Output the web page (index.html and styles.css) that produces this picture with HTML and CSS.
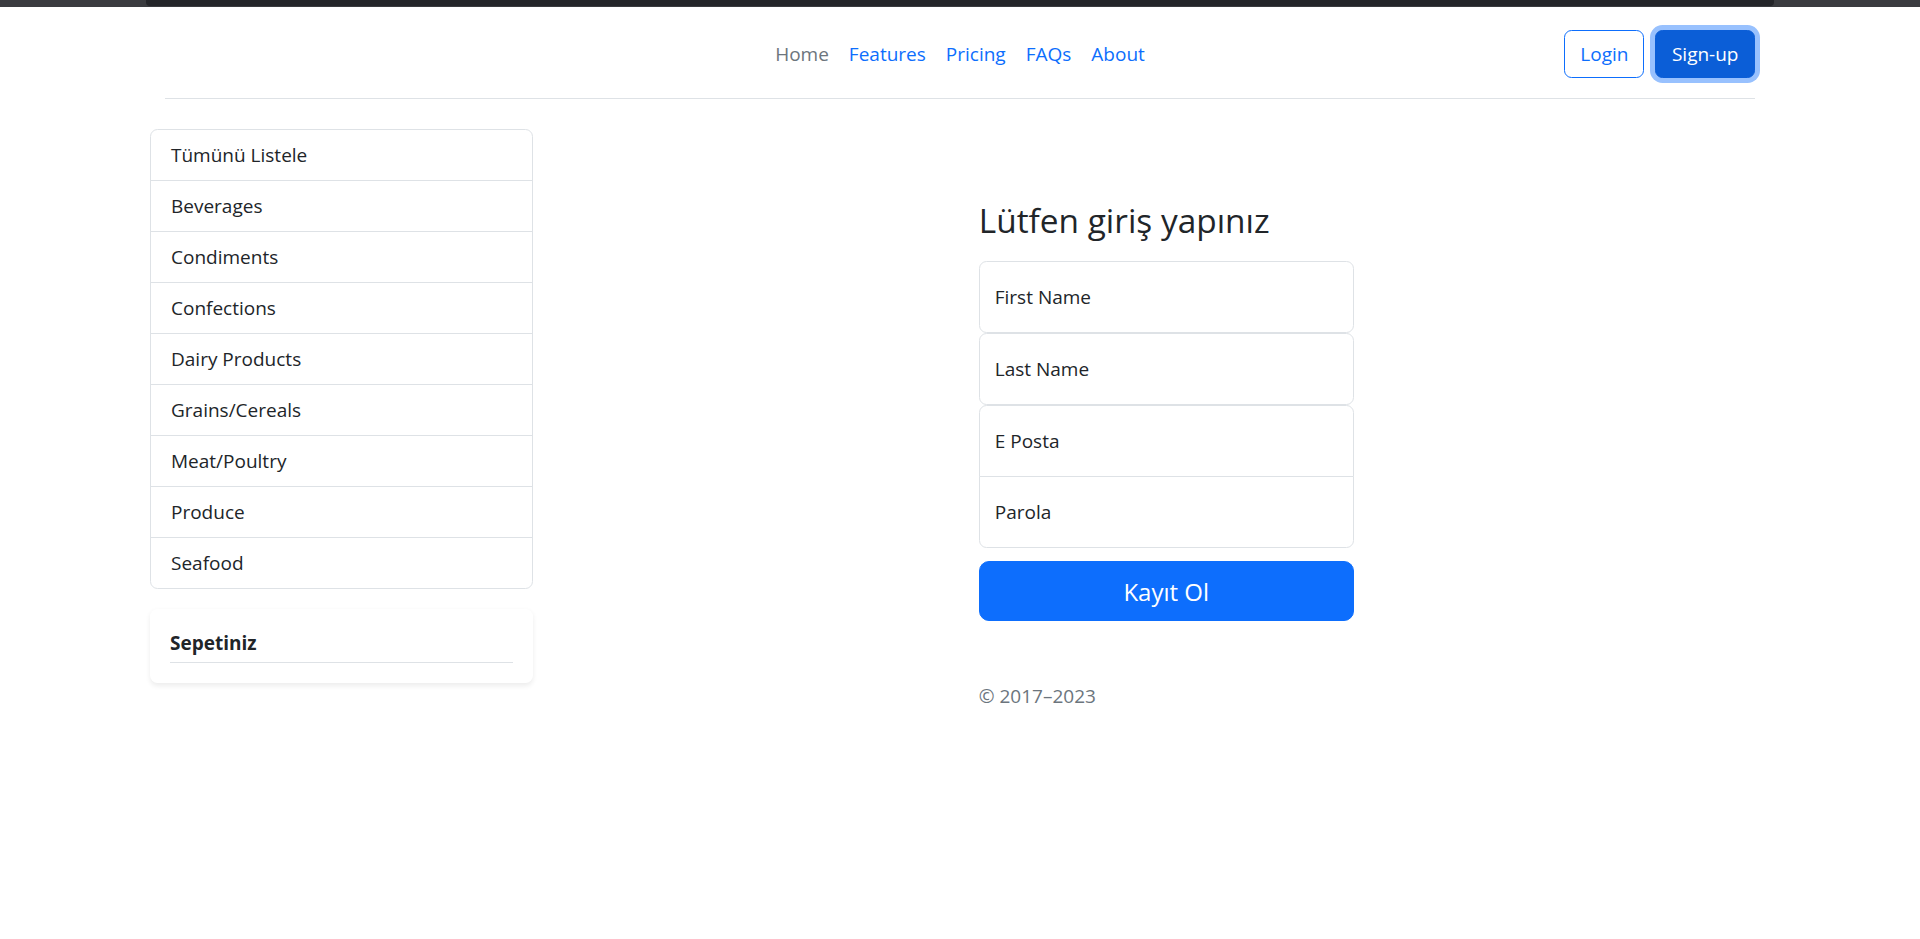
FILE: index.html
```html
<!DOCTYPE html>
<html lang="tr">
<head>
<meta charset="utf-8">
<title>Kayıt Ol</title>
<link rel="stylesheet" href="styles.css">
</head>
<body>
<div class="topbar"><div class="topbar-inner"></div></div>
<div class="container">
  <header class="header">
    <div class="header-side"></div>
    <ul class="nav">
      <li><a class="nav-link nav-link-secondary" href="#">Home</a></li>
      <li><a class="nav-link" href="#">Features</a></li>
      <li><a class="nav-link" href="#">Pricing</a></li>
      <li><a class="nav-link" href="#">FAQs</a></li>
      <li><a class="nav-link" href="#">About</a></li>
    </ul>
    <div class="header-side header-actions">
      <button type="button" class="btn btn-outline">Login</button>
      <button type="button" class="btn btn-primary btn-focus">Sign-up</button>
    </div>
  </header>

  <div class="row">
    <aside class="sidebar">
      <ul class="list-group">
        <li class="list-item">Tümünü Listele</li>
        <li class="list-item">Beverages</li>
        <li class="list-item">Condiments</li>
        <li class="list-item">Confections</li>
        <li class="list-item">Dairy Products</li>
        <li class="list-item">Grains/Cereals</li>
        <li class="list-item">Meat/Poultry</li>
        <li class="list-item">Produce</li>
        <li class="list-item">Seafood</li>
      </ul>
      <div class="card">
        <div class="card-title">Sepetiniz</div>
      </div>
    </aside>

    <main class="main">
      <form class="form-signin">
        <h1 class="form-title">Lütfen giriş yapınız</h1>
        <input class="form-input" type="text" placeholder="First Name">
        <input class="form-input" type="text" placeholder="Last Name">
        <input class="form-input form-input-top" type="email" placeholder="E Posta">
        <input class="form-input form-input-bottom" type="password" placeholder="Parola">
        <button type="button" class="btn-submit">Kayıt Ol</button>
        <p class="copyright">© 2017–2023</p>
      </form>
    </main>
  </div>
</div>
</body>
</html>
```
FILE: styles.css
```css
* {
  box-sizing: border-box;
}

html, body {
  margin: 0;
  padding: 0;
  background: #ffffff;
}

body {
  font-family: "Open Sans", "Noto Sans", "Liberation Sans", sans-serif;
  font-size: 19px;
  line-height: 30px;
  color: #212529;
}

.topbar {
  height: 7px;
  background: #3a3b3f;
  display: flex;
}

.topbar-inner {
  height: 6px;
  margin: 0 146px 0 146px;
  flex: 1;
  background: #242529;
  border-radius: 0 0 4px 4px;
}

.container {
  padding: 0 150px;
}

.header {
  margin: 0 15px;
  padding: 23px 0 20px;
  border-bottom: 1px solid #dee2e6;
  display: grid;
  grid-template-columns: 1fr auto 1fr;
  align-items: center;
}

.nav {
  list-style: none;
  margin: 0;
  padding: 0;
  display: flex;
}

.nav-link {
  display: block;
  padding: 9px 10px;
  color: #0d6efd;
  text-decoration: none;
}

.nav-link-secondary {
  color: #6c757d;
}

.header-actions {
  display: flex;
  justify-content: flex-end;
  gap: 11px;
}

.btn {
  font-family: inherit;
  font-size: 19px;
  line-height: 30px;
  padding: 8px 15px;
  border-radius: 7.5px;
  border: 1px solid #0d6efd;
  cursor: pointer;
}

.btn-outline {
  background: #ffffff;
  color: #0d6efd;
}

.btn-primary {
  padding: 8px 15.5px;
  background: #0b5ed7;
  border-color: #0b5ed7;
  color: #ffffff;
}

.btn-focus {
  box-shadow: 0 0 0 5px #98c1fe;
}

.row {
  display: grid;
  grid-template-columns: 382.5px 1fr;
  column-gap: 30px;
  margin-top: 30px;
}

.list-group {
  list-style: none;
  margin: 0;
  padding: 0;
  border: 1px solid #dee2e6;
  border-radius: 7.5px;
}

.list-item {
  padding: 10px 20px;
  border-top: 1px solid #dee2e6;
  color: #212529;
}

.list-item:first-child {
  border-top: none;
}

.card {
  margin-top: 20px;
  padding: 20px;
  background: #ffffff;
  border-radius: 7.5px;
  box-shadow: 0 2.5px 5px rgba(0, 0, 0, 0.075);
}

.card-title {
  font-weight: 700;
  line-height: 28px;
  padding-bottom: 5px;
  border-bottom: 1px solid #dee2e6;
}

.main {
  display: flex;
  justify-content: center;
}

.form-signin {
  width: 375px;
  margin-top: 70px;
  display: flex;
  flex-direction: column;
}

.form-title {
  margin: 0 0 20px;
  font-size: 33.4px;
  line-height: 42px;
  font-weight: 400;
  color: #212529;
}

.form-input {
  display: block;
  width: 100%;
  height: 72px;
  padding: 0 15px;
  font-family: inherit;
  font-size: 19px;
  color: #212529;
  border: 1px solid #dee2e6;
  border-radius: 7.5px;
  background: #ffffff;
  outline: none;
}

.form-input::placeholder {
  color: #212529;
  opacity: 1;
}

.form-input-top {
  border-bottom-left-radius: 0;
  border-bottom-right-radius: 0;
}

.form-input-bottom {
  margin-top: -1px;
  border-top-left-radius: 0;
  border-top-right-radius: 0;
}

.btn-submit {
  margin-top: 13px;
  height: 60px;
  width: 100%;
  font-family: inherit;
  font-size: 24px;
  color: #ffffff;
  background: #0d6efd;
  border: 1px solid #0d6efd;
  border-radius: 10px;
  cursor: pointer;
}

.copyright {
  margin: 60px 0 0;
  color: #6c757d;
}
```
